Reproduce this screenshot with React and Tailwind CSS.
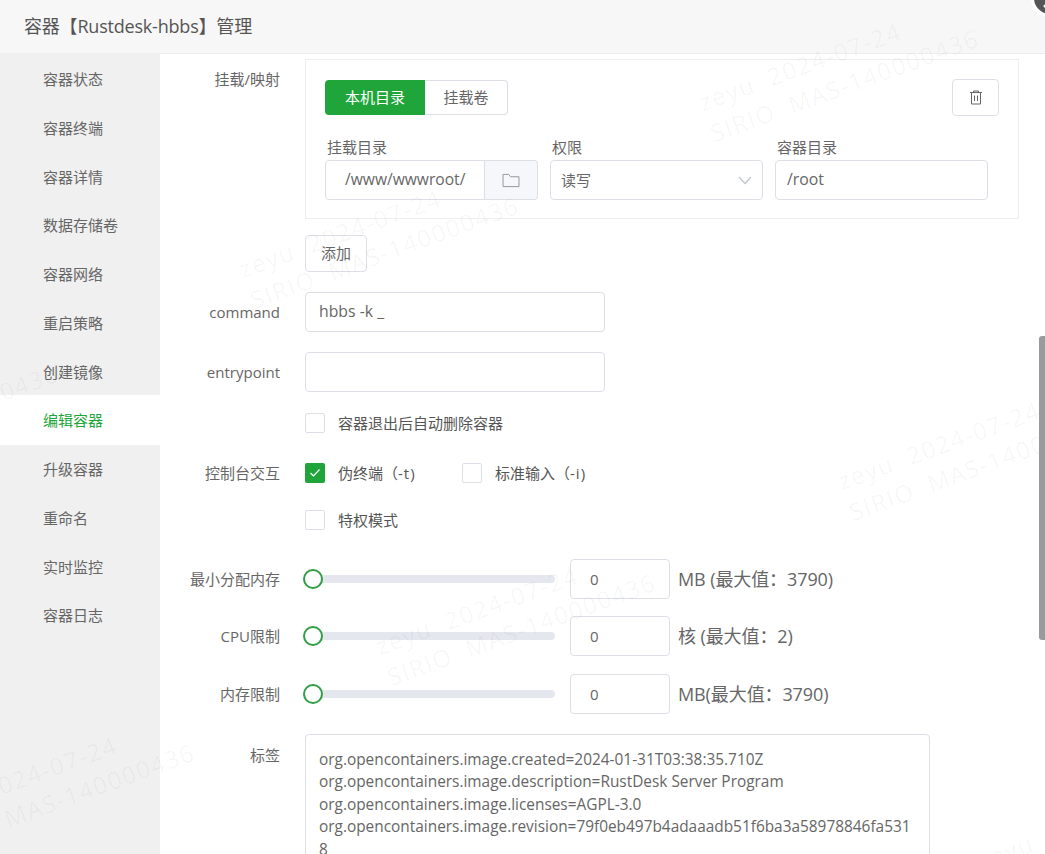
const FONT = "font-['Open_Sans','Noto_Sans_CJK_SC',sans-serif]";

const menu = ['容器状态','容器终端','容器详情','数据存储卷','容器网络','重启策略','创建镜像','编辑容器','升级容器','重命名','实时监控','容器日志'];

const marks = [
  { x: 694, y: 87 },
  { x: 234, y: 254 },
  { x: 833, y: 466 },
  { x: 371, y: 631 },
  { x: -226, y: 422 },
  { x: -90, y: 801 },
  { x: 973, y: 846 },
];

function Watermark({ x, y }) {
  return (
    <div className="absolute pointer-events-none whitespace-pre text-[24px] leading-[33px] tracking-[1.5px] text-[#000000]/[0.04] origin-top-left -rotate-[20deg]" style={{ left: x, top: y }}>
      <div>zeyu  2024-07-24</div>
      <div>SIRIO  MAS-140000436</div>
    </div>
  );
}

function Label({ children, className = '' }) {
  return <div className={`w-[120px] shrink-0 text-right text-[15px] leading-5 text-[#666] ${className}`}>{children}</div>;
}

function Checkbox({ checked, label, flag }) {
  return (
    <div className="flex items-center h-5">
      {checked ? (
        <span className="w-5 h-5 rounded-[2px] bg-[#20a53a] flex items-center justify-center">
          <svg width="12" height="10" viewBox="0 0 12 10" fill="none"><path d="M1.5 5l3 3 6-6.5" stroke="#fff" strokeWidth="1.2" /></svg>
        </span>
      ) : (
        <span className="w-5 h-5 rounded-[2px] border border-[#dcdfe6] bg-white" />
      )}
      <span className="ml-[13px] text-[15px] leading-5 text-[#555]">
        {label}
        {flag && <span className="tracking-[1px]">{flag}</span>}
      </span>
    </div>
  );
}

function SliderRow({ label, unit, className = '' }) {
  return (
    <div className={`flex items-center h-10 shrink-0 ${className}`}>
      <Label>{label}</Label>
      <div className="relative ml-[23px] w-[252px] h-5 flex items-center">
        <div className="ml-[9px] w-[243px] h-2 rounded-full bg-[#e4e7ed]" />
        <span className="absolute left-0 top-0 w-5 h-5 rounded-full bg-white border-2 border-[#2f9e44]" />
      </div>
      <div className="ml-[15px] w-[100px] h-10 rounded-[4px] border border-[#dcdfe6] flex items-center pl-[19px] text-[15px] text-[#666]">0</div>
      <span className="ml-2 text-[18px] tracking-[-0.1px] text-[#666]">{unit}</span>
    </div>
  );
}

export default function App() {
  return (
    <div className={`relative w-[1045px] h-[854px] overflow-hidden bg-white ${FONT}`}>
      <header className="h-[54px] bg-[#f7f7f7] border-b border-[#eeeeee] flex items-center pl-6 text-[18px] tracking-[-0.2px] text-[#555]">
        容器【Rustdesk-hbbs】管理
      </header>
      <div className="flex h-[800px]">
        <aside className="w-[160px] shrink-0 bg-[#f0f0f0]">
          {menu.map((m) =>
            m === '编辑容器' ? (
              <div key={m} className="h-[50px] -my-[0.6px] pt-px bg-white pl-[43px] flex items-center text-[15px] text-[#20a53a]">{m}</div>
            ) : (
              <div key={m} className="h-[48.75px] pt-[2px] pl-[43px] flex items-center text-[15px] text-[#666]">{m}</div>
            )
          )}
        </aside>
        <main className="flex-1 flex flex-col pt-[5px] overflow-hidden">
          <div className="flex shrink-0">
            <Label className="pt-[10px]">挂载/映射</Label>
            <div className="ml-[25px] w-[714px] h-[160px] border border-[#eeeeee] px-[19px] pt-[19px] flex flex-col">
              <div className="flex items-center justify-between h-[37px] shrink-0">
                <div className="flex h-[35px]">
                  <span className="w-[100px] bg-[#20a53a] text-white rounded-l-[4px] flex items-center justify-center text-[15px]">本机目录</span>
                  <span className="w-[83px] border border-l-0 border-[#dcdfe6] rounded-r-[4px] flex items-center justify-center text-[15px] text-[#666]">挂载卷</span>
                </div>
                <span className="w-[47px] h-[37px] border border-[#dcdfe6] rounded-[4px] flex items-center justify-center">
                  <svg width="14" height="15" viewBox="0 0 14 15" fill="none" stroke="#666" strokeWidth="1"><path d="M1 2.5h12M4.5 2.5V1h5v1.5M2.5 2.5V14h9V2.5M5.5 5.5v5.5M8.5 5.5v5.5" /></svg>
                </span>
              </div>
              <div className="flex mt-[21px] gap-3">
                <div className="flex flex-col">
                  <span className="pl-[2px] text-[15px] leading-5 text-[#666]">挂载目录</span>
                  <div className="flex w-[213px] h-10 mt-[3px]">
                    <span className="w-[160px] border border-[#dcdfe6] rounded-l-[4px] flex items-center pl-[19px] text-[15.6px] text-[#666]">/www/wwwroot/</span>
                    <span className="flex-1 border border-l-0 border-[#dcdfe6] rounded-r-[4px] bg-[#f5f7fa] flex items-center justify-center">
                      <svg width="18" height="15" viewBox="0 0 19 16" fill="none" stroke="#909399" strokeWidth="1"><path d="M1 14.5V1.5h6l2 2.5h9v10.5z" /></svg>
                    </span>
                  </div>
                </div>
                <div className="flex flex-col">
                  <span className="pl-[2px] text-[15px] leading-5 text-[#666]">权限</span>
                  <div className="w-[213px] h-10 mt-[3px] border border-[#dcdfe6] rounded-[4px] flex items-center justify-between px-[10px] text-[15px] text-[#666]">
                    读写
                    <svg width="14" height="9" viewBox="0 0 14 9" fill="none" stroke="#c0c4cc" strokeWidth="1.2"><path d="M1 1l6 6.5L13 1" /></svg>
                  </div>
                </div>
                <div className="flex flex-col">
                  <span className="pl-[2px] text-[15px] leading-5 text-[#666]">容器目录</span>
                  <div className="w-[213px] h-10 mt-[3px] border border-[#dcdfe6] rounded-[4px] flex items-center pl-[11px] text-[15.8px] text-[#666]">/root</div>
                </div>
              </div>
            </div>
          </div>

          <div className="ml-[145px] mt-4 w-[62px] h-[37px] shrink-0 border border-[#dcdfe6] rounded-[4px] flex items-center justify-center text-[15px] text-[#666]">添加</div>

          <div className="flex items-center mt-5 shrink-0">
            <Label className="text-[15.7px]">command</Label>
            <div className="ml-[25px] w-[300px] h-10 border border-[#dcdfe6] rounded-[4px] flex items-center pl-[13px] text-[15.8px] text-[#666]">hbbs -k _</div>
          </div>
          <div className="flex items-center mt-5 shrink-0">
            <Label className="text-[15.7px]">entrypoint</Label>
            <div className="ml-[25px] w-[300px] h-10 border border-[#dcdfe6] rounded-[4px]" />
          </div>

          <div className="ml-[145px] mt-[21px] shrink-0"><Checkbox label="容器退出后自动删除容器" /></div>
          <div className="flex items-center mt-[30px] shrink-0">
            <Label>控制台交互</Label>
            <div className="ml-[25px] flex w-[157px]"><Checkbox checked label="伪终端（" flag="-t)" /></div>
            <Checkbox label="标准输入（" flag="-i)" />
          </div>
          <div className="ml-[145px] mt-[27px] shrink-0"><Checkbox label="特权模式" /></div>

          <SliderRow className="mt-[29px]" label="最小分配内存" unit="MB (最大值：3790)" />
          <SliderRow className="mt-[17px]" label="CPU限制" unit="核 (最大值：2)" />
          <SliderRow className="mt-[18px]" label="内存限制" unit="MB(最大值：3790)" />

          <div className="flex mt-5 shrink-0">
            <Label className="pt-[11px]">标签</Label>
            <div className="ml-[25px] w-[625px] h-[140px] border border-[#dcdfe6] rounded-t-[4px] pl-[13px] pt-[14px] text-[15.4px] leading-[22.4px] text-[#666] whitespace-nowrap">
              <div>org.opencontainers.image.created=2024-01-31T03:38:35.710Z</div>
              <div>org.opencontainers.image.description=RustDesk Server Program</div>
              <div>org.opencontainers.image.licenses=AGPL-3.0</div>
              <div>org.opencontainers.image.revision=79f0eb497b4adaaadb51f6ba3a58978846fa531</div>
              <div>8</div>
            </div>
          </div>
        </main>
      </div>

      {marks.map((m) => <Watermark key={`${m.x}-${m.y}`} x={m.x} y={m.y} />)}

      <span className="absolute right-0 top-[336px] w-[6px] h-[304px] rounded-tl-[3px] rounded-bl-[3px] bg-[#9a9a9a]" />
      <span className="absolute left-[1031px] -top-[21px] w-[38px] h-[38px] rounded-full bg-[#555] border-[3px] border-white flex items-center justify-center">
        <svg width="30" height="30" viewBox="0 0 30 30" fill="none" stroke="#fff" strokeWidth="2.5"><path d="M9 24l12-12" /></svg>
      </span>
    </div>
  );
}
